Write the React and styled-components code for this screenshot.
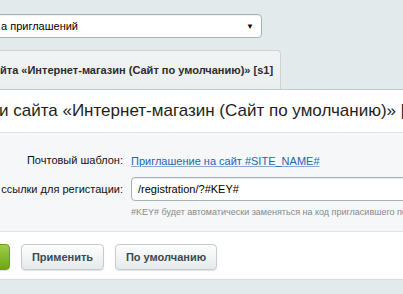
import React from "react";
import styled, { createGlobalStyle } from "styled-components";

const Global = createGlobalStyle`
  html, body { margin: 0; padding: 0; }
  body {
    background: #e3eaec;
    font-family: "Liberation Sans", Arial, sans-serif;
    overflow: hidden;
    width: 403px;
    height: 294px;
  }
`;

const Page = styled.div`
  margin-left: -40px;
  width: 700px;
  padding-top: 14px;
`;

const SelectBox = styled.div`
  box-sizing: border-box;
  width: 302px;
  height: 24px;
  background: #fff;
  border: 1px solid #a7b0b3;
  border-radius: 4px;
  display: flex;
  align-items: center;
  justify-content: space-between;
  padding: 0 7px 0 40px;
  font-size: 11px;
  color: #000;
  box-shadow: inset 0 1px 1px rgba(0,0,0,0.06);
`;

const Arrow = styled.span`
  font-size: 8px;
  color: #111;
`;

const Tabs = styled.div`
  display: flex;
  margin-top: 12px;
`;

const Tab = styled.div`
  box-sizing: border-box;
  width: 321px;
  height: 39px;
  background: linear-gradient(#f2f4f4, #eaeeee);
  border: 1px solid #cdd4d6;
  border-bottom: none;
  border-radius: 0 4px 0 0;
  display: flex;
  align-items: center;
  padding-left: 39px;
  font-size: 11px;
  font-weight: bold;
  color: #2c2c2c;
  white-space: nowrap;
`;

const Panel = styled.div`
  border-top: 1px solid #c2c9cb;
  background: #fff;
`;

const Title = styled.div`
  height: 42px;
  display: flex;
  align-items: center;
  padding-left: 39px;
  font-size: 17px;
  color: #1e1e1e;
  white-space: nowrap;
  border-bottom: 1px solid #dfe4e6;
`;

const Form = styled.div`
  background: #f5f7f8;
  padding: 18px 0 14px;
  display: flex;
  flex-direction: column;
`;

const Row = styled.div`
  display: grid;
  grid-template-columns: 163px 1fr;
  column-gap: 8px;
  align-items: ${(p) => p.$align || "center"};
  margin-bottom: ${(p) => p.$mb || 0}px;
`;

const Label = styled.div`
  text-align: right;
  font-size: 11px;
  color: #111;
  white-space: nowrap;
  line-height: ${(p) => p.$lh || "normal"};
`;

const Link = styled.a`
  font-size: 11px;
  color: #2366ad;
  text-decoration: underline;
  text-decoration-color: #8aa9cf;
  cursor: pointer;
`;

const InputBox = styled.div`
  box-sizing: border-box;
  height: 24px;
  width: 400px;
  border: 1px solid #a7b0b3;
  border-radius: 4px;
  background: #fff;
  display: flex;
  align-items: center;
  padding-left: 6px;
  font-size: 11px;
  color: #000;
  box-shadow: inset 0 1px 1px rgba(0,0,0,0.08);
`;

const Hint = styled.div`
  font-size: 9px;
  color: #868a8c;
  margin-top: 6px;
  white-space: nowrap;
`;

const ButtonBar = styled.div`
  background: #fff;
  border-top: 1px solid #dde3e5;
  border-bottom: 1px solid #d5dcde;
  height: 47px;
  display: flex;
  align-items: center;
  gap: 11px;
`;

const Button = styled.div`
  box-sizing: border-box;
  height: 26px;
  width: ${(p) => p.$w}px;
  margin-left: ${(p) => p.$ml || 0}px;
  margin-top: 2px;
  border-radius: 4px;
  display: flex;
  align-items: center;
  justify-content: center;
  font-size: 11px;
  font-weight: bold;
  color: ${(p) => (p.$green ? "#fff" : "#3c4850")};
  background: ${(p) =>
    p.$green
      ? "linear-gradient(#9ccd4a, #6fa611)"
      : "linear-gradient(#fdfefe, #e6eaeb)"};
  border: 1px solid ${(p) => (p.$green ? "#6b9a1d" : "#c5ccce")};
  box-shadow: 0 1px 1px rgba(0,0,0,0.12);
`;

export default function App() {
  return (
    <>
      <Global />
      <Page>
        <SelectBox>
          <span>а приглашений</span>
          <Arrow>▼</Arrow>
        </SelectBox>
        <Tabs>
          <Tab>йта «Интернет-магазин (Сайт по умолчанию)» [s1]</Tab>
        </Tabs>
        <Panel>
          <Title>и сайта «Интернет-магазин (Сайт по умолчанию)» [s1]</Title>
          <Form>
            <Row $mb={8}>
              <Label>Почтовый шаблон:</Label>
              <div>
                <Link>Приглашение на сайт #SITE_NAME#</Link>
              </div>
            </Row>
            <Row $align="start">
              <Label $lh="24px">ссылки для регистации:</Label>
              <div>
                <InputBox>/registration/?#KEY#</InputBox>
                <Hint>#KEY# будет автоматически заменяться на код пригласившего пользователя</Hint>
              </div>
            </Row>
          </Form>
          <ButtonBar>
            <Button $green $w={80} $ml={-30}>Сохранить</Button>
            <Button $w={83}>Применить</Button>
            <Button $w={102}>По умолчанию</Button>
          </ButtonBar>
        </Panel>
      </Page>
    </>
  );
}
